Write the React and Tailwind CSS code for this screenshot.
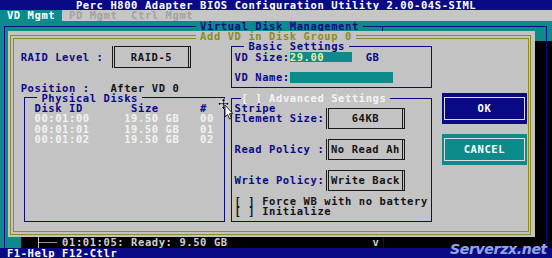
import React from "react";

// BIOS text screen: 80x25 cells, each cell 6.9px x 10.32px

const ValueBox = ({ children }) => (
  <div className="w-[78.5px] h-[21.64px] border-x-[3px] border-y border-double border-[#1a1a1a] flex items-center justify-center text-[#141414] whitespace-pre">
    {children}
  </div>
);

const Panel = ({ title, legendClass, className, children }) => (
  <fieldset className={`border border-[#0a0a86] ${className}`}>
    <legend className={legendClass}>{title}</legend>
    {children}
  </fieldset>
);

const Cursor = () => (
  <svg className="absolute left-[218px] top-[98px]" width="16" height="22" viewBox="0 0 16 22">
    <path d="M5.5 0 L8 3 H6.3 V5 H8.5 V3.3 L11 5.8 L8.5 8.3 V6.6 H6.3 V9 H8 L5.5 11.5 L3 9 H4.7 V6.6 H2.5 V8.3 L0 5.8 L2.5 3.3 V5 H4.7 V3 H3 Z" fill="#111" stroke="#fff" strokeWidth="0.7" />
    <path d="M7 7 L7 19 L9.6 16.6 L11.6 21 L13.4 20.2 L11.4 15.8 L14.8 15.6 Z" fill="#fff" stroke="#111" strokeWidth="0.9" />
  </svg>
);

const App = () => {
  return (
    <div className="w-[552px] h-[258px] overflow-hidden relative flex flex-col bg-black font-['DejaVu_Sans_Mono',monospace] font-bold text-[10.5px] tracking-[0.58px] leading-[10.32px]">

      {/* title bar */}
      <div className="h-[10.32px] shrink-0 bg-[#0a0a86] text-white pl-[75.9px] whitespace-pre">
        Perc H800 Adapter BIOS Configuration Utility 2.00-04S-SIML
      </div>

      {/* tabs */}
      <div className="h-[10.32px] shrink-0 bg-[#c6c6c6] flex">
        <div className="w-[62.1px] bg-[#0d8a8a] text-white pl-[6.9px] whitespace-pre">VD Mgmt</div>
        <div className="pl-[6.9px] whitespace-pre text-[#a2a2a2]">PD Mgmt  Ctrl Mgmt</div>
      </div>

      {/* virtual disk management frame */}
      <div className="h-[227.04px] shrink-0 bg-[#0d8a8a] flex flex-col">
        <div className="h-[10.32px] shrink-0 flex items-end">
          <div className="ml-[3.5px] w-[192px] h-[5.16px] border-l border-t border-[#0a0a86]" />
          <div className="h-[10.32px] px-[4.6px] text-[#0a0a86] whitespace-pre">Virtual Disk Management</div>
          <div className="w-[19px] h-[5.16px] border-t border-[#0a0a86]" />
          <div className="flex-1 h-[5.16px] border-t border-l border-r border-[#0a0a86] mr-[5px]" />
        </div>

        <div className="h-[206.4px] shrink-0 flex">
          <div className="w-[8px] shrink-0">
            <div className="ml-[3.5px] h-full border-l border-[#0a0a86]" />
          </div>

          {/* Add VD dialog */}
          <div className="relative w-[527px] shrink-0 bg-[#c3c3c3] pt-[4px] pl-[2px] pr-[3.7px] pb-[2.5px] flex flex-col">
            <div className="flex-1 border border-[#8c8c22] p-[1.8px] flex">
              <div className="flex-1 border border-[#8c8c22] pt-[2.52px] flex items-start">

                {/* left column */}
                <div className="w-[211.45px] shrink-0 flex flex-col">
                  <div className="h-[30.96px] flex items-center">
                    <span className="w-[89.7px] pl-[6.9px] text-[#0a0a86] whitespace-pre">RAID Level :</span>
                    <div className="ml-[8.85px]">
                      <ValueBox>RAID-5</ValueBox>
                    </div>
                  </div>
                  <div className="h-[10.32px]" />
                  <div className="h-[10.32px] pl-[6.9px] whitespace-pre">
                    <span className="text-[#0a0a86]">Position :</span>
                    <span className="text-[#141414]">{"   After VD 0"}</span>
                  </div>
                  <Panel
                    title="Physical Disks"
                    legendClass="ml-[12.25px] px-[4px] text-[#0a0a86] whitespace-pre"
                    className="ml-[10.35px] w-[201.1px] h-[129.5px]"
                  >
                    <div className="pl-[9.35px] whitespace-pre">
                      <div className="text-[#0a0a86]">{"Disk ID       Size      #"}</div>
                      <div className="text-[#f2f2f2]">{"00:01:00     19.50 GB   00"}</div>
                      <div className="text-[#f2f2f2]">{"00:01:01     19.50 GB   01"}</div>
                      <div className="text-[#f2f2f2]">{"00:01:02     19.50 GB   02"}</div>
                    </div>
                  </Panel>
                </div>

                {/* settings column */}
                <div className="ml-[5.9px] w-[201.1px] shrink-0 flex flex-col">
                  <Panel
                    title="Basic Settings"
                    legendClass="ml-[12.25px] px-[4px] text-[#0a0a86] whitespace-pre"
                    className="w-[201.1px] h-[46.94px]"
                  >
                    <div className="pl-[2.45px]">
                      <div className="h-[10.32px] flex">
                        <span className="w-[55.2px] text-[#0a0a86] whitespace-pre">VD Size:</span>
                        <div className="w-[62.1px] bg-[#0d8a8a] text-[#eeeea4]">29.00</div>
                        <span className="ml-[13.8px] text-[#0a0a86]">GB</span>
                      </div>
                      <div className="h-[10.32px]" />
                      <div className="h-[10.32px] flex">
                        <span className="w-[55.2px] text-[#0a0a86] whitespace-pre">VD Name:</span>
                        <div className="w-[103.5px] bg-[#0d8a8a]" />
                      </div>
                    </div>
                  </Panel>

                  <Panel
                    title="[ ] Advanced Settings"
                    legendClass="ml-[9.35px] pr-[4px] text-[#f4f4f4] whitespace-pre"
                    className="mt-[4.66px] w-[201.1px] h-[129.5px]"
                  >
                    <div className="pl-[2.45px]">
                      <div className="h-[30.96px] flex">
                        <div className="w-[89.7px] text-[#0a0a86] whitespace-pre flex flex-col">
                          <span>Stripe</span>
                          <span>Element Size:</span>
                        </div>
                        <div className="ml-[1.95px] self-center">
                          <ValueBox>64KB</ValueBox>
                        </div>
                      </div>
                      <div className="h-[30.96px] flex items-center">
                        <span className="w-[89.7px] text-[#0a0a86] whitespace-pre">Read Policy :</span>
                        <div className="ml-[1.95px]">
                          <ValueBox>No Read Ah</ValueBox>
                        </div>
                      </div>
                      <div className="h-[30.96px] flex items-center">
                        <span className="w-[89.7px] text-[#0a0a86] whitespace-pre">Write Policy:</span>
                        <div className="ml-[1.95px]">
                          <ValueBox>Write Back</ValueBox>
                        </div>
                      </div>
                      <div className="text-[#141414] whitespace-pre">[ ] Force WB with no battery</div>
                      <div className="text-[#141414] whitespace-pre">[ ] Initialize</div>
                    </div>
                  </Panel>
                </div>

                {/* buttons */}
                <div className="ml-[9.35px] w-[85.7px] shrink-0 flex flex-col pt-[51.6px]">
                  <div className="h-[30.96px] bg-[#0a0a86] p-[4px_2px]">
                    <div className="h-full border border-[#dcdcdc] flex items-center justify-center text-white">OK</div>
                  </div>
                  <div className="mt-[10.32px] h-[30.96px] bg-[#0d8a8a] p-[4px_2px]">
                    <div className="h-full border border-[#dcdcdc] flex items-center justify-center text-white">CANCEL</div>
                  </div>
                </div>
              </div>
            </div>
            <span className="absolute left-[188.1px] top-0 h-[10.32px] px-[4px] bg-[#c3c3c3] text-[#8c8c22] whitespace-pre">
              Add VD in Disk Group 0
            </span>
          </div>

          <div className="flex-1 flex flex-col">
            <div className="h-[10.32px] shrink-0">
              <div className="ml-[11px] h-full border-l border-[#0a0a86]" />
            </div>
            <div className="flex-1 bg-black">
              <div className="ml-[11px] h-full border-l border-[#0a0a86]" />
            </div>
          </div>
        </div>

        {/* status line of the disk tree */}
        <div className="h-[10.32px] shrink-0 flex">
          <div className="w-[20.7px] shrink-0">
            <div className="ml-[3.5px] h-full border-l border-[#0a0a86]" />
          </div>
          <div className="flex-1 bg-black flex">
            <div className="w-[17.3px] shrink-0" />
            <div className="w-[19px] shrink-0 border-l border-[#bdbdbd] flex items-center">
              <div className="w-full border-t border-[#9a9a9a]" />
            </div>
            <div className="w-[5.1px] shrink-0" />
            <div className="w-[310.5px] shrink-0 text-[#cfcfcf] whitespace-pre">01:01:05: Ready: 9.50 GB</div>
            <div className="w-[6.9px] shrink-0 text-[#cfcfcf]">v</div>
            <div className="w-[3.5px] shrink-0" />
            <div className="w-[163px] shrink-0 border-l border-[#0a0a86]" />
            <div className="flex-1 border-l border-[#0a0a86]" />
          </div>
        </div>
      </div>

      {/* key help */}
      <div className="flex-1 bg-[#0a0a86] text-white pl-[6.9px] whitespace-pre">F1-Help F12-Ctlr</div>

      <span className="absolute right-[5px] bottom-[1px] font-['DejaVu_Sans',sans-serif] italic font-bold text-[14px] leading-[16px] tracking-[-0.3px] text-[#93a4e2] [text-shadow:0_0_1px_#1a2a8a]">
        Serverzx.net
      </span>

      <Cursor />
    </div>
  );
};

export default App;
